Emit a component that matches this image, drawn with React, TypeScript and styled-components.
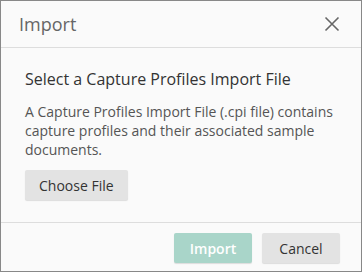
import React from "react";
import styled, { createGlobalStyle } from "styled-components";

const Global = createGlobalStyle`
  html, body { margin: 0; padding: 0; background: #ffffff; }
  * { box-sizing: border-box; }
`;

const Dialog = styled.div`
  width: 362px;
  height: 272px;
  border: 1px solid #888888;
  background: #fafafa;
  display: flex;
  flex-direction: column;
  font-family: "Open Sans", "Liberation Sans", sans-serif;
`;

const Header = styled.div`
  height: 47px;
  flex: none;
  display: flex;
  align-items: center;
  justify-content: space-between;
  padding: 0 20px 1px 18px;
  border-bottom: 1px solid #dddddd;
`;

const Title = styled.h1`
  margin: 0;
  font-size: 18px;
  font-weight: 400;
  color: #666666;
`;

const CloseButton = styled.button`
  border: none;
  background: transparent;
  padding: 0;
  width: 18px;
  height: 18px;
  display: flex;
  align-items: center;
  justify-content: center;
  cursor: pointer;
`;

const Body = styled.div`
  flex: 1;
  padding: 20px 24px 0 24px;
  display: flex;
  flex-direction: column;
  align-items: flex-start;
`;

const Heading = styled.h2`
  margin: 0;
  font-size: 16px;
  line-height: 22px;
  font-weight: 500;
  color: #333333;
`;

const Text = styled.p`
  margin: 12px 0 11px 0;
  font-size: 14px;
  line-height: 19px;
  color: #555555;
`;

const Button = styled.button<{ $primary?: boolean }>`
  height: 30px;
  min-width: 78px;
  padding: 0 14px;
  border: none;
  border-radius: 2px;
  font-family: inherit;
  font-size: 14px;
  font-weight: ${(p) => (p.$primary ? 600 : 400)};
  color: ${(p) => (p.$primary ? "#ffffff" : "#333333")};
  background: ${(p) => (p.$primary ? "#a9d5c9" : "#e3e3e3")};
  box-shadow: 0 1px 1px rgba(0, 0, 0, 0.12);
  cursor: pointer;
`;

const Footer = styled.div`
  height: 49px;
  flex: none;
  border-top: 1px solid #dddddd;
  display: flex;
  justify-content: flex-end;
  align-items: flex-start;
  gap: 10px;
  padding: 10px 21px 0 0;
`;

export default function App() {
  return (
    <>
      <Global />
      <Dialog>
        <Header>
          <Title>Import</Title>
          <CloseButton aria-label="Close">
            <svg width="16" height="16" viewBox="0 0 16 16">
              <path d="M1.5 1.5 L14.5 14.5 M14.5 1.5 L1.5 14.5" stroke="#666" strokeWidth="1.6" fill="none" />
            </svg>
          </CloseButton>
        </Header>
        <Body>
          <Heading>Select a Capture Profiles Import File</Heading>
          <Text>
            A Capture Profiles Import File (.cpi file) contains capture profiles and their associated sample
            documents.
          </Text>
          <Button>Choose File</Button>
        </Body>
        <Footer>
          <Button $primary>Import</Button>
          <Button>Cancel</Button>
        </Footer>
      </Dialog>
    </>
  );
}
